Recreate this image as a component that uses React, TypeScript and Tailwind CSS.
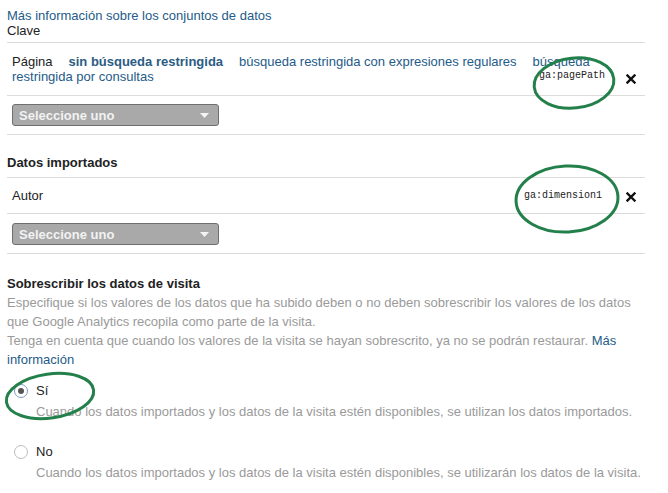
import React from 'react';

const link = 'text-[#245b88]';

function SelectBox() {
  return (
    <div className="flex h-[22px] w-[207px] items-center justify-between rounded-[3px] border border-[#6f6f6f] bg-[#a9a9a9] pl-[6px] pr-[9px]">
      <span className="text-[13px] font-bold text-[#f2f2f2]">Seleccione uno</span>
      <svg width="9" height="5" viewBox="0 0 9 5">
        <path d="M0 0 L9 0 L4.5 5 Z" fill="#f4f4f4" />
      </svg>
    </div>
  );
}

function RemoveIcon() {
  return (
    <svg width="10" height="10" viewBox="0 0 10 10">
      <path d="M1.5 1.5 L8.5 8.5 M8.5 1.5 L1.5 8.5" stroke="#111" strokeWidth="2.4" strokeLinecap="square" />
    </svg>
  );
}

function FieldCode({ name }: { name: string }) {
  return (
    <span className="font-['Liberation_Mono',monospace] text-[10px] leading-[12px] text-[#222]">{name}</span>
  );
}

function Radio({ checked, label, hint }: { checked?: boolean; label: string; hint: string }) {
  return (
    <div>
      <div className="flex h-[19px] items-center">
        <span
          className={
            checked
              ? 'ml-[7px] flex h-[14px] w-[14px] items-center justify-center rounded-full border border-[#7f9cc2] bg-white'
              : 'ml-[7px] flex h-[14px] w-[14px] items-center justify-center rounded-full border border-[#bdbdbd] bg-white'
          }
        >
          {checked && <span className="h-[6px] w-[6px] rounded-full bg-[#555]" />}
        </span>
        <span className="ml-[8px] text-[13px] text-[#222]">{label}</span>
      </div>
      <div className="mt-[2px] pl-[29px] text-[13px] leading-[19px] text-[#9a9a9a]">{hint}</div>
    </div>
  );
}

export default function App() {
  return (
    <div className="relative min-h-[493px] w-[668px] bg-white font-['Liberation_Sans',Arial,sans-serif]">
      <div className="w-[645px] pl-[7px] pt-[8px] text-[13px] leading-[15px]">
        <div className="border-b border-[#dcdcdc] pb-[4px]">
          <div className={link}>Más información sobre los conjuntos de datos</div>
          <div className="text-[#222]">Clave</div>
        </div>

        {/* key row: match type links + dimension */}
        <div className="grid border-b border-[#dcdcdc] py-[11px] pl-[5px]">
          <div className="col-start-1 row-start-1">
            <span className="mr-[16px] text-[#222]">Página</span>
            <span className="mr-[16px] font-bold text-[#2b5c84]">sin búsqueda restringida</span>
            <span className={`mr-[16px] ${link}`}>búsqueda restringida con expresiones regulares</span>
            <span className={link}>búsqueda restringida por consultas</span>
          </div>
          <div className="col-start-1 row-start-1 flex items-end justify-end gap-[21px] self-end pr-[9px]">
            <span className="mb-[2px]"><FieldCode name="ga:pagePath" /></span>
            <RemoveIcon />
          </div>
        </div>

        <div className="border-b border-[#dcdcdc] py-[8px] pl-[5px]">
          <SelectBox />
        </div>

        <div className="border-b border-[#dcdcdc] pb-[7px] pt-[20px] font-bold text-[#222]">Datos importados</div>

        <div className="flex items-center justify-between border-b border-[#dcdcdc] py-[10px] pl-[5px] pr-[9px]">
          <span className="text-[#222]">Autor</span>
          <div className="flex items-center gap-[24px]">
            <FieldCode name="ga:dimension1" />
            <span className="mt-[3px]"><RemoveIcon /></span>
          </div>
        </div>

        <div className="border-b border-[#dcdcdc] pb-[8px] pt-[9px] pl-[5px]">
          <SelectBox />
        </div>

        <div className="pt-[20px] leading-[19px]">
          <div className="font-bold text-[#222]">Sobrescribir los datos de visita</div>
          <p className="text-[#9a9a9a]">
            Especifique si los valores de los datos que ha subido deben o no deben sobrescribir los valores de los datos que Google Analytics recopila como parte de la visita.
          </p>
          <p className="text-[#9a9a9a]">
            Tenga en cuenta que cuando los valores de la visita se hayan sobrescrito, ya no se podrán restaurar.{' '}
            <span className={link}>Más información</span>
          </p>
        </div>

        <div className="mt-[12px] flex flex-col gap-[21px]">
          <Radio
            checked
            label="Sí"
            hint="Cuando los datos importados y los datos de la visita estén disponibles, se utilizan los datos importados."
          />
          <Radio
            label="No"
            hint="Cuando los datos importados y los datos de la visita estén disponibles, se utilizarán los datos de la visita."
          />
        </div>
      </div>

      {/* green highlight rings drawn on top */}
      <svg className="pointer-events-none absolute left-0 top-0" width="668" height="493">
        <g fill="none" stroke="#23804a" strokeWidth="3">
          <ellipse cx="574" cy="83" rx="40" ry="25" transform="rotate(-6 574 83)" />
          <ellipse cx="567" cy="199" rx="51" ry="33" transform="rotate(-3 567 199)" />
          <ellipse cx="50" cy="396" rx="44" ry="22" transform="rotate(-8 50 396)" />
        </g>
      </svg>
    </div>
  );
}
